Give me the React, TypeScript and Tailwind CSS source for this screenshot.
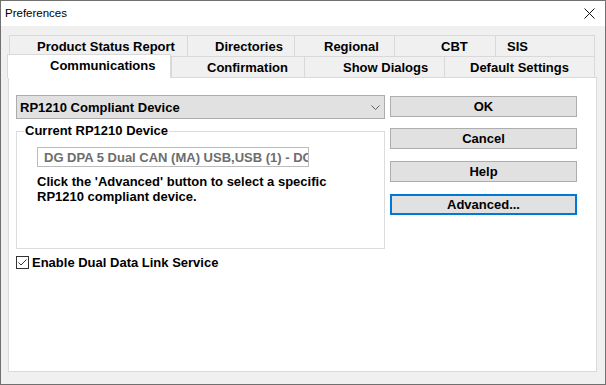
import React from "react";

const topTabs = [
  { label: "Product Status Report", w: "w-[178px]", pl: "pl-[27px]" },
  { label: "Directories", w: "w-[107px]", pl: "pl-[27px]" },
  { label: "Regional", w: "w-[100px]", pl: "pl-[29px]" },
  { label: "CBT", w: "w-[101px]", pl: "pl-[46px]" },
  { label: "SIS", w: "w-[100px]", pl: "pl-[11px]" },
];

const bottomTabs = [
  { label: "Confirmation", w: "w-[133px]", pl: "pl-[35px]" },
  { label: "Show Dialogs", w: "w-[140px]", pl: "pl-[38px]" },
  { label: "Default Settings", w: "w-[151px]", pl: "pl-[25px]" },
];

export default function App() {
  return (
    <div className="w-[606px] h-[385px] border border-[#707070] flex flex-col bg-[#f0f0f0] font-['Liberation_Sans',Arial,sans-serif] text-black overflow-hidden">
      {/* Title bar */}
      <div className="h-[25px] bg-white flex items-center justify-between pl-[4px] pr-[10px]">
        <span className="text-[11.5px] leading-none">Preferences</span>
        <svg width="11" height="11" viewBox="0 0 11 11">
          <path d="M0.5 0.5 L10.5 10.5 M10.5 0.5 L0.5 10.5" stroke="#111" strokeWidth="1" fill="none" />
        </svg>
      </div>

      {/* Body */}
      <div className="flex-1 flex flex-col pt-[9px]">
        {/* Top tab row */}
        <div className="flex pl-[8px] h-[21px]">
          {topTabs.map((t, i) => (
            <div
              key={t.label}
              className={`${t.w} ${t.pl} h-[21px] border-l border-t border-[#d9d9d9] ${
                i === topTabs.length - 1 ? "border-r" : ""
              } flex items-center text-[13px] font-bold leading-none whitespace-nowrap`}
            >
              {t.label}
            </div>
          ))}
        </div>
        {/* Bottom tab row */}
        <div className="flex items-end pl-[6px] h-[21px]">
          <div className="relative z-10 w-[164px] h-[24px] -mb-[1px] bg-white border-l border-t border-r border-[#d9d9d9] pl-[42px] pt-[4px] text-[13px] font-bold leading-none whitespace-nowrap">
            Communications
          </div>
          {bottomTabs.map((t, i) => (
            <div
              key={t.label}
              className={`${t.w} ${t.pl} h-[21px] border-l border-t border-[#d9d9d9] ${
                i === bottomTabs.length - 1 ? "border-r" : ""
              } flex items-center text-[13px] font-bold leading-none whitespace-nowrap`}
            >
              {t.label}
            </div>
          ))}
        </div>

        {/* Panel */}
        <div className="flex-1 ml-[7px] mr-[8px] mb-[12px] bg-white border border-[#dadada] flex items-start pl-[7px] pt-[17px]">
          {/* Left column */}
          <div className="w-[369px] flex flex-col">
            <div className="h-[24px] border border-[#adadad] bg-[#e1e1e1] flex items-center justify-between pl-[3px] pr-[4px]">
              <span className="text-[13px] font-bold leading-none">RP1210 Compliant Device</span>
              <svg width="9" height="5" viewBox="0 0 9 5">
                <path d="M0.5 0.5 L4.5 4.5 L8.5 0.5" stroke="#606060" strokeWidth="1" fill="none" />
              </svg>
            </div>

            <fieldset className="mt-[5px] border border-[#dcdcdc] pb-[44px] pt-[9px]">
              <legend className="ml-[7px] px-[1px] text-[13px] font-bold leading-[14px]">
                Current RP1210 Device
              </legend>
              <div className="ml-[20px] w-[272px] h-[20px] border border-[#bcbcbc] bg-white flex items-center pl-[6px] overflow-hidden whitespace-nowrap">
                <span className="text-[13px] font-bold leading-none text-[#6d6d6d]">
                  DG DPA 5 Dual CAN (MA) USB,USB (1) - DG DPA 5 Dual CAN
                </span>
              </div>
              <div className="ml-[20px] mt-[7px] text-[13px] font-bold leading-[15px]">
                Click the 'Advanced' button to select a specific
                <br />
                RP1210 compliant device.
              </div>
            </fieldset>

            <label className="mt-[7px] flex items-center gap-[3px]">
              <span className="w-[13px] h-[13px] border border-[#333333] bg-white flex items-center justify-center">
                <svg width="11" height="11" viewBox="0 0 11 11">
                  <path d="M1.5 5.5 L4 8 L9.5 2.5" stroke="#333333" strokeWidth="1" fill="none" />
                </svg>
              </span>
              <span className="text-[13px] font-bold leading-none">Enable Dual Data Link Service</span>
            </label>
          </div>

          {/* Buttons */}
          <div className="w-[187px] ml-[5px] mt-[1px] flex flex-col">
            <button className="h-[21px] border border-[#adadad] bg-[#e1e1e1] text-[13px] font-bold leading-none">
              OK
            </button>
            <button className="mt-[11px] h-[21px] border border-[#adadad] bg-[#e1e1e1] text-[13px] font-bold leading-none">
              Cancel
            </button>
            <button className="mt-[12px] h-[21px] border border-[#adadad] bg-[#e1e1e1] text-[13px] font-bold leading-none">
              Help
            </button>
            <button className="mt-[12px] h-[21px] border-2 border-[#0078d7] bg-[#e1e1e1] text-[13px] font-bold leading-none">
              Advanced...
            </button>
          </div>
        </div>
      </div>
    </div>
  );
}
